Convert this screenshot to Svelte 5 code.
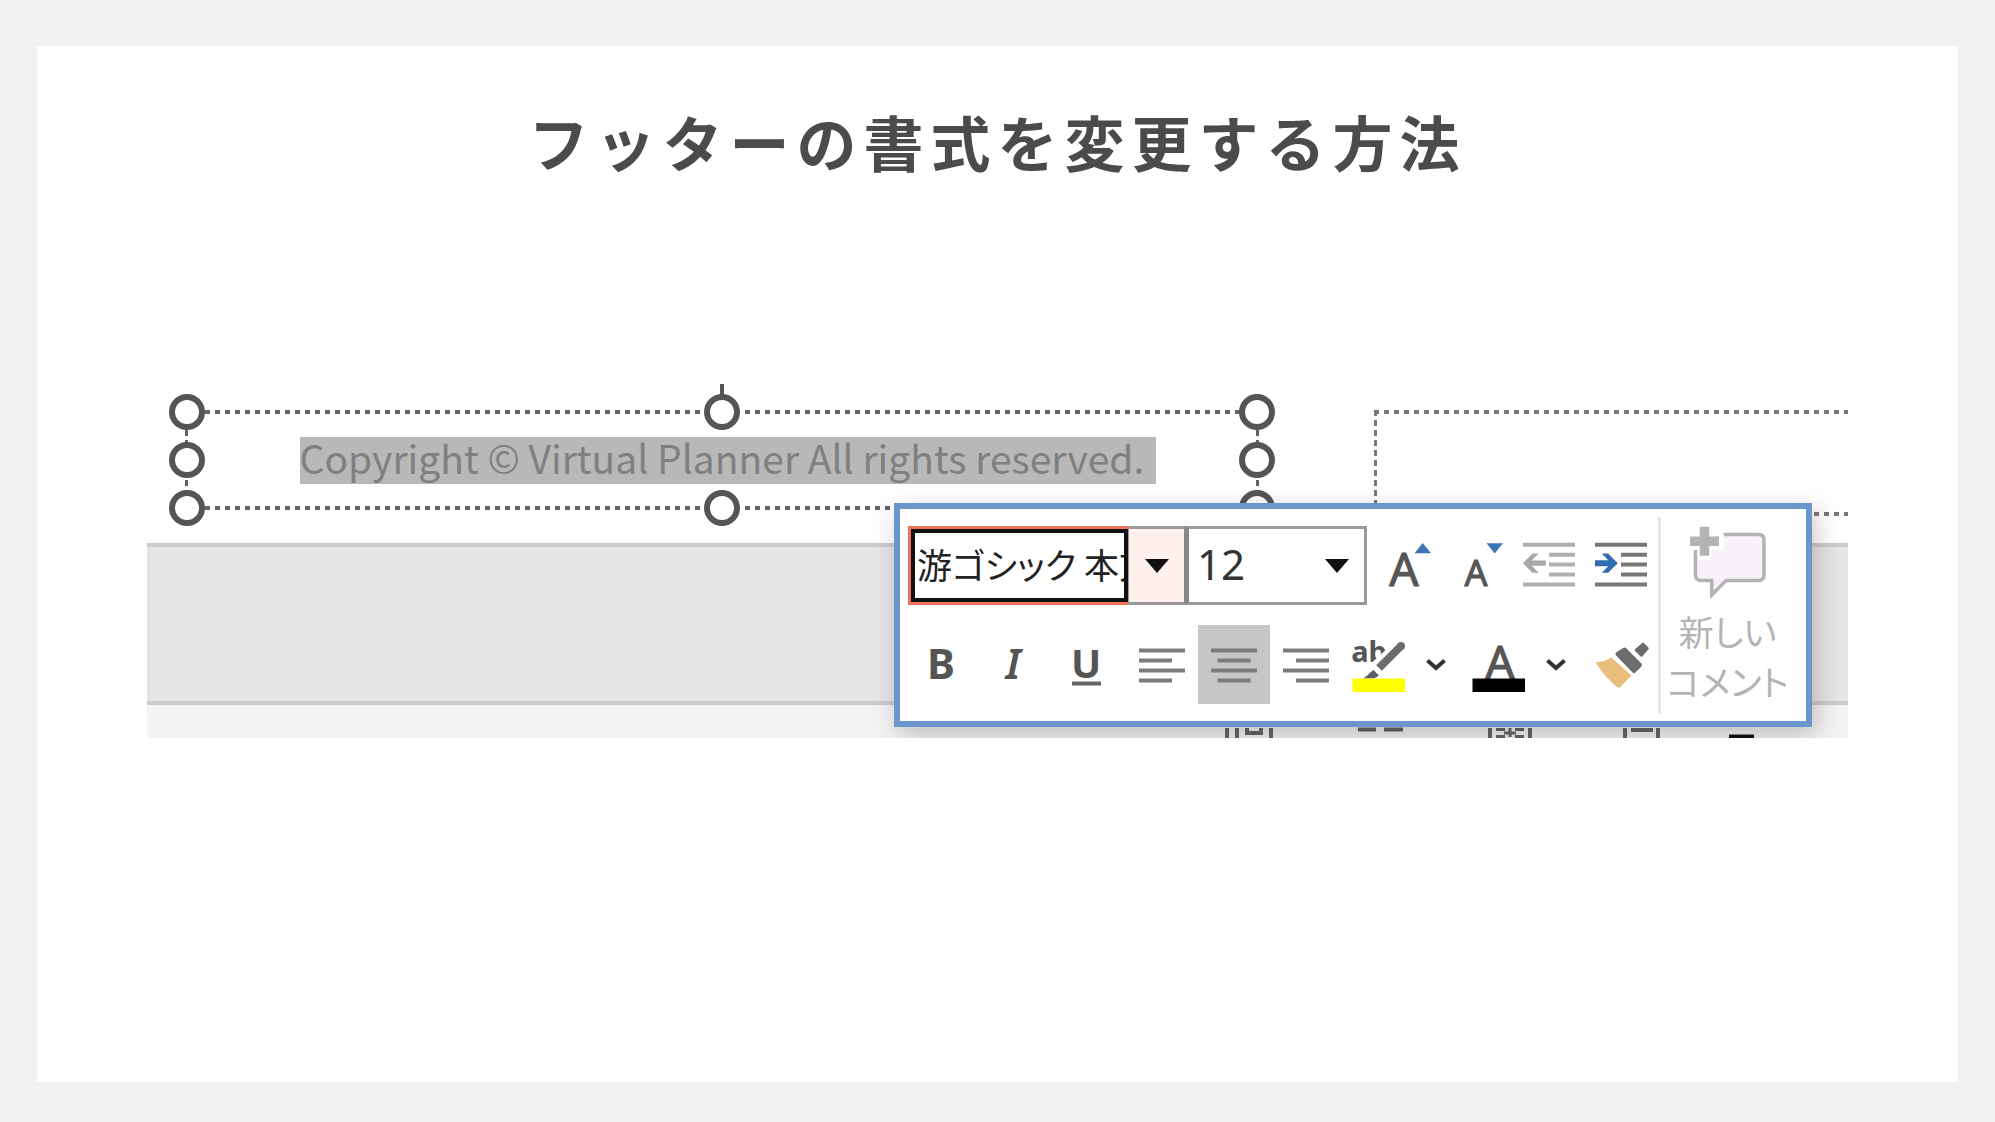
<script>
	let fontName = $state('游ゴシック 本文');
	let fontSize = $state('12');
	let align = $state('center');

	const handles = ['tl', 'tc', 'tr', 'ml', 'mr', 'bl', 'bc', 'br'];

	const alignments = [
		{ id: 'left', label: '左揃え', d: 'M4 12.5H50M4 22.5H37M4 32.5H50M4 42.5H37' },
		{ id: 'center', label: '中央揃え', d: 'M4 12.5H50M10.5 22.5H43.5M4 32.5H50M10.5 42.5H43.5' },
		{ id: 'right', label: '右揃え', d: 'M4 12.5H50M17 22.5H50M4 32.5H50M17 42.5H50' }
	];
</script>

{#snippet chevron()}
	<svg width="20" height="14" viewBox="0 0 20 14">
		<path d="M1.5 2.5L10 10L18.5 2.5" fill="none" stroke="#333" stroke-width="4" />
	</svg>
{/snippet}

<main class="page">
	<section class="card">
		<h1>フッターの書式を変更する方法</h1>

		<div class="stage">
			<!-- フッターのプレースホルダー -->
			<div class="placeholders">
				<div class="box selected">
					<span class="footer-text">Copyright © Virtual Planner All rights reserved.</span>
					<i class="tail"></i>
					{#each handles as pos}
						<i class="handle {pos}"></i>
					{/each}
				</div>
				<div class="box next"></div>
			</div>

			<div class="band"></div>

			<!-- ステータスバー -->
			<div class="status">
				<svg width="530" height="10" viewBox="0 0 530 10">
					<path d="M2 0V10M12 0V10M46 0V10" stroke="#666" stroke-width="4" />
					<path d="M22 0V5H36V0" fill="none" stroke="#666" stroke-width="4" />
					<path d="M133 1.5H151M159 1.5H178" stroke="#666" stroke-width="4" />
					<path d="M265 0V10M305 0V10M400 0V10M433 0V10" stroke="#666" stroke-width="4" />
					<path d="M271 1.5H280M290 1.5H299M271 8.5H280M290 8.5H299M279 5H291M285 0V9" stroke="#666" stroke-width="3" />
					<path d="M406 2H428" stroke="#666" stroke-width="4" />
					<path d="M504 8.5H529" stroke="#111" stroke-width="4" />
				</svg>
			</div>

			<!-- ミニツールバー -->
			<div class="toolbar" role="toolbar" aria-label="書式">
				<div class="controls">
					<div class="row fields">
						<div class="font-field">
							<input type="text" aria-label="フォント" bind:value={fontName} />
						</div>
						<button class="font-drop" aria-label="フォントの一覧">
							<svg width="24" height="14" viewBox="0 0 24 14"><path d="M0 0H24L12 14Z" fill="#111" /></svg>
						</button>
						<div class="size-field">
							<select aria-label="フォント サイズ" bind:value={fontSize}>
								<option>12</option>
								<option>14</option>
								<option>18</option>
							</select>
							<svg width="24" height="14" viewBox="0 0 24 14"><path d="M0 0H24L12 14Z" fill="#111" /></svg>
						</div>
						<div class="group sizing">
							<button class="tool" aria-label="フォント サイズの拡大">
								<svg width="54" height="54" viewBox="0 0 54 54">
									<text class="glyph medium" x="25" y="47" font-size="46">A</text>
									<path d="M35.5 14.2L43.7 4L52 14.2Z" fill="#3a76b5" />
								</svg>
							</button>
							<button class="tool" aria-label="フォント サイズの縮小">
								<svg width="54" height="54" viewBox="0 0 54 54">
									<text class="glyph medium" x="25" y="47" font-size="36">A</text>
									<path d="M35.5 4.2H52L43.7 14.4Z" fill="#3a76b5" />
								</svg>
							</button>
							<button class="tool" aria-label="インデントを減らす" disabled>
								<svg width="54" height="54" viewBox="0 0 54 54">
									<path d="M0 5.8H52M26 15.7H52M26 25.6H52M26 35.5H52M0 45.4H52" stroke="#b0afb0" stroke-width="4" />
									<path d="M0 24.2L9.5 14.6H15.8L8.6 21.6H22.8V26.8H8.6L15.8 33.8H9.5Z" fill="#aaa8aa" />
								</svg>
							</button>
							<button class="tool" aria-label="インデントを増やす">
								<svg width="54" height="54" viewBox="0 0 54 54">
									<path d="M0 5.8H52M26 15.7H52M26 25.6H52M26 35.5H52M0 45.4H52" stroke="#777" stroke-width="4" />
									<path d="M22.8 24.2L13.1 14.6H6.8L13.2 21.2H0V27.2H13.2L6.8 33.8H13.1Z" fill="#2f6db0" />
								</svg>
							</button>
						</div>
					</div>

					<div class="row">
						<button class="tool" aria-label="太字">
							<svg width="54" height="54" viewBox="0 0 54 54">
								<text class="glyph bold" x="26" y="41" font-size="42">B</text>
							</svg>
						</button>
						<button class="tool" aria-label="斜体">
							<svg width="54" height="54" viewBox="0 0 54 54">
								<text class="glyph italic" x="26" y="41" font-size="42">I</text>
							</svg>
						</button>
						<button class="tool" aria-label="下線">
							<svg width="54" height="54" viewBox="0 0 54 54">
								<text class="glyph bold" x="27" y="40" font-size="40">U</text>
								<path d="M13 45.5H42" stroke="#666" stroke-width="4" />
							</svg>
						</button>
						<div class="group">
							{#each alignments as item}
								<button
									class="tool"
									class:active={align === item.id}
									aria-label={item.label}
									aria-pressed={align === item.id}
									onclick={() => (align = item.id)}
								>
									<svg width="54" height="54" viewBox="0 0 54 54">
										<path d={item.d} stroke="#7c7c7c" stroke-width="4" />
									</svg>
								</button>
							{/each}
						</div>
						<button class="tool" aria-label="蛍光ペンの色">
							<svg width="54" height="54" viewBox="0 0 54 54">
								<text class="glyph bold" x="18" y="23.5" font-size="29">ab</text>
								<path d="M52 5L10 43" stroke="#fff" stroke-width="13" />
								<path d="M50 8L28 30" stroke="#6c6c6c" stroke-width="8" />
								<circle cx="50" cy="8" r="4" fill="#6c6c6c" />
								<path d="M22.5 32L28 37.5L23 40.5H11.5C16.5 38.5 19 34 22.5 32Z" fill="#5d5d68" />
								<rect x="1.5" y="40.5" width="52.5" height="13.5" fill="#ff0" />
							</svg>
						</button>
						<button class="drop" aria-label="蛍光ペンの色の一覧">{@render chevron()}</button>
						<div class="group">
							<button class="tool" aria-label="フォントの色">
								<svg width="54" height="54" viewBox="0 0 54 54">
									<text class="glyph medium" x="29" y="40.5" font-size="46">A</text>
									<rect x="1.5" y="40.5" width="52.5" height="13.5" fill="#000" />
								</svg>
							</button>
							<button class="drop" aria-label="フォントの色の一覧">{@render chevron()}</button>
						</div>
						<button class="tool painter" aria-label="書式のコピー/貼り付け">
							<svg width="54" height="54" viewBox="0 0 54 54">
								<path d="M0.7 24.2C7 24.5 12 22 16.3 19.5L36.5 37.5L24 50.2C16 44.5 7 35 0.7 24.2Z" fill="#e9bd7c" />
								<path d="M22.5 16L29.5 11.5L45 27L39 33Z" fill="#6c6c6c" stroke="#6c6c6c" stroke-width="4" stroke-linejoin="round" />
								<path d="M41 12L48 6L52.5 10.5L46.5 17.5Z" fill="#6c6c6c" stroke="#6c6c6c" stroke-width="2.5" stroke-linejoin="round" />
							</svg>
						</button>
					</div>
				</div>

				<button class="comment" disabled>
					<svg width="76" height="74" viewBox="0 0 76 74">
						<path d="M5.5 24V49Q5.5 54.5 11 54.5H21.8V69L36 54.5H68.5Q74 54.5 74 49V14Q74 8.5 68.5 8.5H33V24Z" fill="#f6f2f8" />
						<path d="M5.5 24V49Q5.5 54.5 11 54.5H21.8V69L36 54.5H68.5Q74 54.5 74 49V14Q74 8.5 68.5 8.5H33" fill="none" stroke="#b5b2b6" stroke-width="3.5" />
						<path d="M14.5 0V34M0 15.3H34" stroke="#fff" stroke-width="14" />
						<path d="M14.5 0.7V29.7M0 15.3H29" stroke="#b5b3b6" stroke-width="9.5" />
					</svg>
					<span>新しい<br />コメント</span>
				</button>
			</div>
		</div>
	</section>
</main>

<style>
	:global(body) {
		background: #f1f1f1;
	}

	.page {
		box-sizing: border-box;
		min-height: 100vh;
		display: flex;
		padding: 46px 37px 40px;
		font-family: 'Noto Sans CJK JP', sans-serif;
	}

	.card {
		flex: 1;
		padding: 58px 110px;
		background: #fff;
	}

	h1 {
		margin: 0;
		color: #4b4b4b;
		font-size: 60px;
		line-height: 74px;
		font-weight: 700;
		letter-spacing: 7px;
		text-align: center;
	}

	.stage {
		position: relative;
		margin-top: 192px;
		overflow: hidden;
	}

	svg {
		overflow: visible;
	}

	/* プレースホルダー */
	.placeholders {
		display: grid;
		grid-template-columns: 1070fr 472fr;
		column-gap: 119px;
		align-items: start;
		padding: 42px 0 29px 40px;
	}

	.box {
		--dot: #636363;
		box-sizing: border-box;
		height: 100px;
		margin: -2px;
		background:
			repeating-linear-gradient(90deg, var(--dot) 0 5px, transparent 5px 10px) top / 100% 4px no-repeat,
			repeating-linear-gradient(90deg, var(--dot) 0 5px, transparent 5px 10px) bottom / 100% 4px no-repeat,
			repeating-linear-gradient(var(--dot) 0 6px, transparent 6px 10px) left / 3px 100% no-repeat,
			repeating-linear-gradient(var(--dot) 0 6px, transparent 6px 10px) right / 3px 100% no-repeat;
	}

	.selected {
		position: relative;
		display: flex;
		align-items: center;
		justify-content: center;
		padding-left: 12px;
	}

	.next {
		--dot: #777;
		height: 106px;
		margin-right: 0;
		background-size: 100% 4px, 100% 4px, 3px 100%, 0 0;
	}

	.footer-text {
		padding: 0 12px 6px 0;
		background: #b8b8b8;
		color: #808080;
		font-size: 39px;
		line-height: 41px;
		white-space: nowrap;
	}

	.handle {
		position: absolute;
		box-sizing: border-box;
		width: 36px;
		height: 36px;
		margin: -18px;
		border: 6px solid #555;
		border-radius: 50%;
		background: #fff;
	}
	.tl, .tc, .tr {
		top: 2px;
	}
	.ml, .mr {
		top: 50%;
	}
	.bl, .bc, .br {
		top: 98px;
	}
	.tl, .ml, .bl {
		left: 2px;
	}
	.tc, .bc {
		left: 50%;
	}
	.tr, .mr, .br {
		left: calc(100% - 2px);
	}

	.tail {
		position: absolute;
		top: -26px;
		left: calc(50% - 2px);
		width: 4px;
		height: 16px;
		background: #555;
	}

	.band {
		height: 154px;
		border: solid #ccc;
		border-width: 4px 0;
		background: #e5e5e5;
	}

	.status {
		display: flex;
		align-items: flex-end;
		justify-content: flex-end;
		height: 33px;
		padding-right: 93px;
		background: #f3f3f3;
	}

	/* ツールバー */
	.toolbar {
		position: absolute;
		top: 133px;
		right: 36px;
		display: flex;
		padding: 8px 12px 8px 6px;
		border: 6px solid #6b96cb;
		background: #fff;
		box-shadow: 4px 8px 24px rgba(0, 0, 0, 0.22);
	}

	.controls {
		display: flex;
		flex-direction: column;
		gap: 20px;
		padding: 9px 0;
		border-right: 3px solid #e6e6e6;
	}

	.row,
	.group {
		display: flex;
	}

	.fields {
		padding-left: 2px;
	}

	.group {
		margin-left: 4px;
	}

	.sizing {
		margin-left: auto;
	}

	button {
		display: flex;
		align-items: center;
		justify-content: center;
		padding: 0;
		border: 0;
		background: none;
		font-family: inherit;
	}

	.tool {
		width: 72px;
		height: 79px;
	}

	.drop {
		width: 44px;
		height: 79px;
	}

	.painter {
		margin-left: 8px;
	}

	.active {
		background: #c6c6c6;
	}

	.glyph {
		fill: #555;
		font-family: 'Noto Sans', sans-serif;
		text-anchor: middle;
	}
	.medium {
		stroke: #555;
		stroke-width: 1px;
	}
	.bold {
		font-weight: 700;
	}
	.italic {
		font-weight: 600;
		font-style: italic;
	}

	.font-field {
		border: 3px solid #f0705a;
		border-right: 0;
	}

	.font-field input {
		box-sizing: border-box;
		width: 217px;
		height: 73px;
		padding: 0 0 4px 2px;
		border: 4px solid #111;
		outline: 0;
		background: #fff;
		color: #222;
		font-family: 'Noto Sans CJK JP', sans-serif;
		font-size: 35px;
		font-feature-settings: 'palt';
	}

	.font-drop {
		width: 56px;
		border: solid #999;
		border-width: 3px 0 3px 1px;
		background: #fdf0ed;
	}

	.size-field {
		display: grid;
		align-items: center;
		box-sizing: border-box;
		width: 183px;
		border: 3px solid #999;
		border-left: 5px solid #888;
	}

	.size-field select,
	.size-field svg {
		grid-area: 1 / 1;
	}

	.size-field select {
		appearance: none;
		height: 100%;
		padding: 0 8px 4px;
		border: 0;
		background: #fff;
		color: #333;
		font-family: 'Noto Sans', sans-serif;
		font-size: 42px;
	}

	.size-field svg {
		justify-self: end;
		margin-right: 15px;
		pointer-events: none;
	}

	.comment {
		flex-direction: column;
		justify-content: flex-start;
		gap: 6px;
		width: 133px;
		padding-top: 9px;
		color: #b4b4b4;
		font-size: 35px;
		line-height: 50px;
		font-weight: 400;
		font-feature-settings: 'palt';
		white-space: nowrap;
	}
</style>
